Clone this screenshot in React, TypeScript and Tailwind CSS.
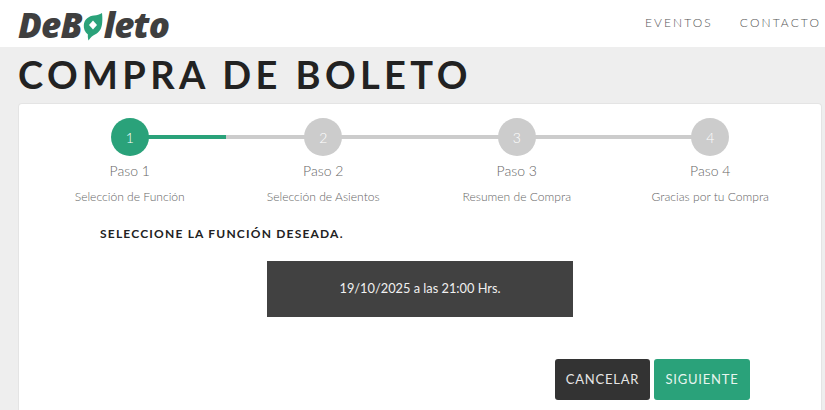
import React from 'react';

const STEPS = [
  { n: '1', label: 'Paso 1', sub: 'Selección de Función' },
  { n: '2', label: 'Paso 2', sub: 'Selección de Asientos' },
  { n: '3', label: 'Paso 3', sub: 'Resumen de Compra' },
  { n: '4', label: 'Paso 4', sub: 'Gracias por tu Compra' },
];

const PinO: React.FC = () => (
  <svg width="20" height="29" viewBox="0 0 20 29" className="mx-[1px] mt-[5px] shrink-0">
    <path d="M19 1c.4 3.500.5 6 .2 9.500C18.800 17 16 20.500 12 22.500c-2.500 1.200-4.500 3-6.500 6-.7-2.500-.8-4-.6-6C1.800 20 .5 16.500 .8 13 1.300 7 6 4 11 3.500c3-.3 5.500-1 8-2.500Z" fill="#2AA27A" />
    <path d="M10 8.500l4 4.500-4 4.500-4-4.500Z" fill="#fff" />
  </svg>
);

const App: React.FC = () => {
  return (
    <div className="w-[825px] h-[410px] overflow-hidden bg-[#eeeeee] font-['Lato',sans-serif]">
      <header className="h-[47px] bg-white flex items-center justify-between pl-[18px] pr-[4px]">
        <div className="flex items-center h-[47px] pt-[1px] text-[#3f3f3f] font-['Open_Sans',sans-serif] font-extrabold italic text-[35px] tracking-[-0.900px] leading-none">
          <span>DeB</span>
          <PinO />
          <span>leto</span>
        </div>
        <nav className="flex gap-[27px] text-[12px] font-light tracking-[2.100px] text-[#555555] -mt-[1px]">
          <a>EVENTOS</a>
          <a>CONTACTO</a>
        </nav>
      </header>

      <h1 className="h-[54px] pl-[18px] flex items-center text-[38px] leading-none font-bold tracking-[4.400px] text-[#222222]">
        COMPRA DE BOLETO
      </h1>

      <main className="mt-[2px] ml-[18px] w-[804px] h-[320px] bg-white rounded-t-[4px] border border-[#e4e4e4] border-b-0">
        <div className="grid grid-cols-4 px-[14px] pt-[14px]">
          {STEPS.map((step, i) => (
            <div key={step.n} className="relative flex flex-col items-center">
              {i < 3 && <div className="absolute left-1/2 top-[17px] w-full h-[4px] bg-[#cccccc]" />}
              {i === 0 && <div className="absolute left-1/2 top-[17px] w-[96px] h-[4px] bg-[#2AA27A]" />}
              <div className={`relative w-[38px] h-[38px] rounded-full flex items-center justify-center text-[14px] font-light text-white ${i === 0 ? 'bg-[#2AA27A]' : 'bg-[#cccccc]'}`}>
                {step.n}
              </div>
              <p className="mt-[6px] text-[14px] leading-[18px] font-light text-[#666666]">{step.label}</p>
              <p className="mt-[8px] text-[12.100px] leading-[18px] font-light text-[#666666]">{step.sub}</p>
            </div>
          ))}
        </div>

        <h2 className="mt-[18px] ml-[81px] text-[12px] leading-[20px] font-bold tracking-[1.200px] text-[#222222]">
          SELECCIONE LA FUNCIÓN DESEADA.
        </h2>

        <div className="mt-[17px] ml-[248px] w-[306px] h-[56px] bg-[#414141] flex items-center justify-center text-[12.800px] text-[#f0f0f0]">
          19/10/2025 a las 21:00 Hrs.
        </div>

        <div className="mt-[42px] ml-[536px] flex gap-[4px]">
          <button className="w-[95px] h-[41px] rounded-[3px] bg-[#333333] text-[13px] tracking-[0.800px] text-[#e6e6e6]">CANCELAR</button>
          <button className="w-[96px] h-[41px] rounded-[3px] bg-[#2AA27A] text-[13px] tracking-[0.800px] text-[#e6f5ef]">SIGUIENTE</button>
        </div>
      </main>
    </div>
  );
};

export default App;
